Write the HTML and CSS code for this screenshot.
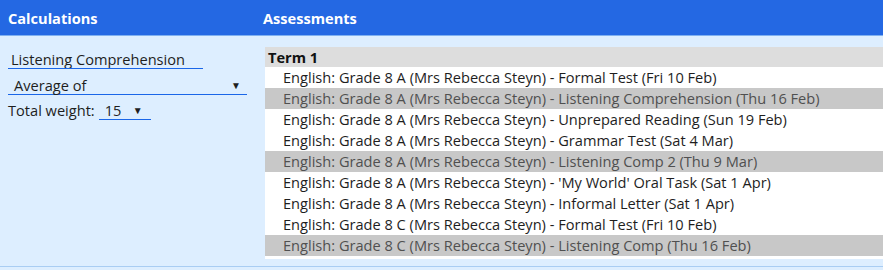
FILE: index.html
```html
<!DOCTYPE html>
<html lang="en">
<head>
  <meta charset="UTF-8" />
  <title>Calculations</title>
  <link rel="stylesheet" href="styles.css">
</head>
<body>
  <div class="head">
    <div class="head-cell calc-col">Calculations</div>
    <div class="head-cell">Assessments</div>
  </div>

  <div class="main">
    <div class="calc-col calc-body">
      <input class="name-input" type="text" value="Listening Comprehension">
      <div class="select wide">
        <span>Average of</span>
        <span class="arrow">&#9660;</span>
      </div>
      <div class="weight-row">
        <label>Total weight:</label>
        <div class="select small">
          <span>15</span>
          <span class="arrow">&#9660;</span>
        </div>
      </div>
    </div>

    <div class="assess-col">
      <div class="list">
        <div class="term">Term 1</div>
        <div class="item">English: Grade 8 A (Mrs Rebecca Steyn) - Formal Test (Fri 10 Feb)</div>
        <div class="item picked">English: Grade 8 A (Mrs Rebecca Steyn) - Listening Comprehension (Thu 16 Feb)</div>
        <div class="item">English: Grade 8 A (Mrs Rebecca Steyn) - Unprepared Reading (Sun 19 Feb)</div>
        <div class="item">English: Grade 8 A (Mrs Rebecca Steyn) - Grammar Test (Sat 4 Mar)</div>
        <div class="item picked">English: Grade 8 A (Mrs Rebecca Steyn) - Listening Comp 2 (Thu 9 Mar)</div>
        <div class="item">English: Grade 8 A (Mrs Rebecca Steyn) - 'My World' Oral Task (Sat 1 Apr)</div>
        <div class="item">English: Grade 8 A (Mrs Rebecca Steyn) - Informal Letter (Sat 1 Apr)</div>
        <div class="item">English: Grade 8 C (Mrs Rebecca Steyn) - Formal Test (Fri 10 Feb)</div>
        <div class="item picked">English: Grade 8 C (Mrs Rebecca Steyn) - Listening Comp (Thu 16 Feb)</div>
      </div>
    </div>
  </div>
</body>
</html>
```

FILE: styles.css
```css
body {
  margin: 0;
  font-family: 'Open Sans', sans-serif;
  font-size: 14.6px;
  color: #1E1E1E;
  background: #DDEEFF;
}
.head {
  display: flex;
  height: 35px;
  background: #2468E3;
  border-bottom: 1px solid #7FB0F0;
  color: #fff;
  font-weight: bold;
}
.head-cell {
  display: flex;
  align-items: center;
  padding: 0 8px;
}
.calc-col {
  width: 239px;
  flex: none;
}
.main {
  display: flex;
  height: 230px;
  border-bottom: 1px solid #A9CDF3;
}
.calc-body {
  padding: 13px 8px 0;
}
.name-input {
  display: block;
  width: 195px;
  box-sizing: border-box;
  margin: 0 0 6px;
  padding: 0 3px;
  height: 20px;
  font: inherit;
  color: #1E1E1E;
  background: transparent;
  border: none;
  border-bottom: 1px solid #1A66E8;
  outline: none;
}
.select {
  display: flex;
  justify-content: space-between;
  align-items: center;
  box-sizing: border-box;
  height: 20px;
  border-bottom: 1px solid #1A66E8;
}
.select.wide {
  width: 239px;
  padding: 0 6px 0 6px;
}
.select.small {
  width: 52px;
  padding: 0 8px 0 6px;
}
.arrow {
  font-size: 10px;
}
.weight-row {
  display: flex;
  align-items: center;
  gap: 4px;
  margin-top: 5px;
}
.assess-col {
  flex: 1;
  padding: 11px 0 0 10px;
}
.list {
  background: #fff;
  padding-bottom: 3px;
}
.term {
  background: #DDDDDD;
  font-weight: bold;
  height: 20px;
  line-height: 20px;
  padding-left: 3px;
  color: #111;
}
.item {
  height: 21px;
  line-height: 21px;
  padding-left: 18px;
}
.item.picked {
  background: #C8C8C8;
  color: #505050;
}
```
